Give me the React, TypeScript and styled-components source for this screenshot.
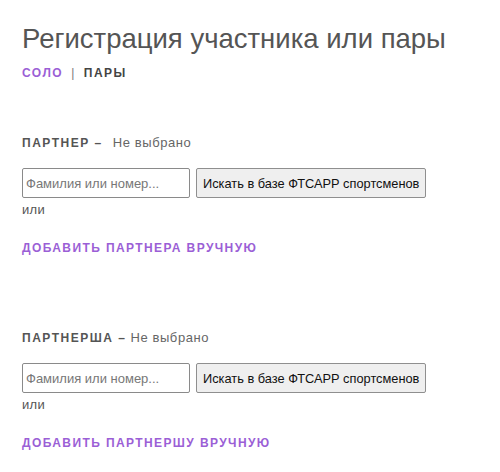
import React from 'react';
import styled, { createGlobalStyle } from 'styled-components';

const GlobalStyle = createGlobalStyle`
  body {
    margin: 0;
    background: #ffffff;
    font-family: "Liberation Sans", Arial, sans-serif;
  }
`;

const Page = styled.div`
  padding: 22px 22px 0 22px;
  color: #555;
`;

const Title = styled.h1`
  margin: 0;
  font-size: 27.5px;
  font-weight: 400;
  color: #555;
  line-height: 34px;
`;

const Tabs = styled.nav`
  display: flex;
  align-items: center;
  gap: 8px;
  margin-top: 10px;
  font-size: 12px;
  font-weight: 700;
  letter-spacing: 1.5px;
`;

const Tab = styled.span<{ active?: boolean }>`
  color: ${({ active }) => (active ? '#9b5fd6' : '#444')};
`;

const Divider = styled.span`
  color: #777;
  font-weight: 400;
`;

const Block = styled.section`
  margin-top: 55px;

  & + & {
    margin-top: 75px;
  }
`;

const BlockHead = styled.div`
  display: flex;
  align-items: baseline;
  font-size: 13px;
`;

const Label = styled.span`
  font-size: 12px;
  font-weight: 700;
  letter-spacing: 1.5px;
  color: #555;
`;

const Status = styled.span<{ wide?: boolean }>`
  margin-left: ${({ wide }) => (wide ? '10px' : '4px')};
  color: #666;
  letter-spacing: 0.6px;
`;

const SearchRow = styled.div`
  display: flex;
  gap: 6px;
  margin-top: 18px;
`;

const Input = styled.input`
  box-sizing: border-box;
  width: 168px;
  height: 30px;
  padding: 2px 3px;
  border: 1px solid #8a8a8a;
  border-radius: 2px;
  font-family: "Liberation Sans", Arial, sans-serif;
  font-size: 13px;
  color: #333;

  &::placeholder {
    color: #777;
  }
`;

const SearchButton = styled.button`
  box-sizing: border-box;
  height: 30px;
  padding: 0 6px;
  background: #efefef;
  border: 1px solid #8f8f8f;
  border-radius: 2px;
  font-family: "Liberation Sans", Arial, sans-serif;
  font-size: 12.8px;
  color: #111;
`;

const Or = styled.div`
  margin-top: 4px;
  font-size: 13px;
  color: #555;
  letter-spacing: 0.3px;
`;

const AddLink = styled.a`
  display: block;
  margin-top: 24px;
  font-size: 12px;
  font-weight: 700;
  letter-spacing: 1.4px;
  color: #9b5fd6;
  text-decoration: none;
  cursor: pointer;
`;

interface PersonBlockProps {
  label: string;
  addText: string;
  wide?: boolean;
}

const PersonBlock: React.FC<PersonBlockProps> = ({ label, addText, wide }) => (
  <Block>
    <BlockHead>
      <Label>{label} –</Label>
      <Status wide={wide}>Не выбрано</Status>
    </BlockHead>
    <SearchRow>
      <Input placeholder="Фамилия или номер..." />
      <SearchButton>Искать в базе ФТСАРР спортсменов</SearchButton>
    </SearchRow>
    <Or>или</Or>
    <AddLink>{addText}</AddLink>
  </Block>
);

const App: React.FC = () => (
  <Page>
    <GlobalStyle />
    <Title>Регистрация участника или пары</Title>
    <Tabs>
      <Tab active>СОЛО</Tab>
      <Divider>|</Divider>
      <Tab>ПАРЫ</Tab>
    </Tabs>
    <PersonBlock label="ПАРТНЕР" addText="ДОБАВИТЬ ПАРТНЕРА ВРУЧНУЮ" wide />
    <PersonBlock label="ПАРТНЕРША" addText="ДОБАВИТЬ ПАРТНЕРШУ ВРУЧНУЮ" />
  </Page>
);

export default App;
